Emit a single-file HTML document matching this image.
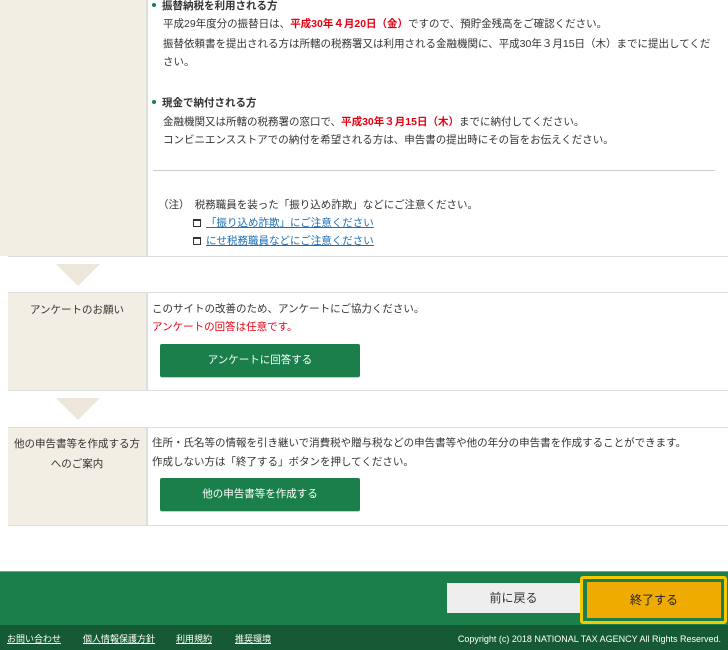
<!DOCTYPE html>
<html><head><meta charset="utf-8"><style>
*{margin:0;padding:0;box-sizing:border-box}
body{width:728px;height:650px;overflow:hidden;background:#fff;font-family:"Liberation Sans","Noto Sans CJK JP",sans-serif;font-size:10.5px;color:#333;position:relative}
.abs{position:absolute}
.beige{background:#f2eee4}
.red{color:#e60012;font-weight:bold}
.t{position:absolute;white-space:nowrap;line-height:18px}
.b{font-weight:bold}
.dot{display:inline-block;width:4px;height:4px;border-radius:2px;background:#1a7f4b;margin:0 6px 2px 0;vertical-align:middle}
.lnk{color:#1a6fb5;text-decoration:underline}
.ico{display:inline-block;width:8px;height:8px;border:1.5px solid #333;border-top-width:2.5px;margin-right:5px;vertical-align:-1px}
.tri{position:absolute;width:0;height:0;border-left:22px solid transparent;border-right:22px solid transparent;border-top:22px solid #ece7da}
.btn{position:absolute;background:#1a7f4b;color:#fff;text-align:center;font-size:10.5px;border-radius:2px;box-shadow:0 1px 0 #b9d8c4}
.lbl{position:absolute;text-align:center;line-height:20px;font-size:10.5px;color:#333}
</style></head><body>
<div class="abs beige" style="left:0;top:0;width:146px;height:256px"></div>
<div class="abs" style="left:146px;top:0;width:2px;height:256px;background:#ddd"></div>
<div class="abs" style="left:8px;top:256px;width:720px;height:1px;background:#ddd"></div>
<div class="t b" style="left:152px;top:-3px"><span class="dot"></span>振替納税を利用される方</div>
<div class="t" style="left:163px;top:15px">平成29年度分の振替日は、<span class="red">平成30年４月20日（金）</span>ですので、預貯金残高をご確認ください。</div>
<div class="t" style="left:163px;top:35px">振替依頼書を提出される方は所轄の税務署又は利用される金融機関に、平成30年３月15日（木）までに提出してくだ</div>
<div class="t" style="left:163px;top:53px">さい。</div>
<div class="t b" style="left:152px;top:94px"><span class="dot"></span>現金で納付される方</div>
<div class="t" style="left:163px;top:113px">金融機関又は所轄の税務署の窓口で、<span class="red">平成30年３月15日（木）</span>までに納付してください。</div>
<div class="t" style="left:163px;top:131px">コンビニエンスストアでの納付を希望される方は、申告書の提出時にその旨をお伝えください。</div>
<div class="abs" style="left:153px;top:170px;width:562px;height:1px;background:#ccc"></div>
<div class="t" style="left:158px;top:196px">（注）　税務職員を装った「振り込め詐欺」などにご注意ください。</div>
<div class="t" style="left:193px;top:214px"><span class="ico"></span><span class="lnk">「振り込め詐欺」にご注意ください</span></div>
<div class="t" style="left:193px;top:232px"><span class="ico"></span><span class="lnk">にせ税務職員などにご注意ください</span></div>

<div class="tri" style="left:56px;top:264px"></div>
<div class="abs" style="left:8px;top:292px;width:720px;height:1px;background:#ddd"></div>
<div class="abs beige" style="left:8px;top:293px;width:138px;height:97px"></div>
<div class="abs" style="left:146px;top:293px;width:2px;height:97px;background:#ddd"></div>
<div class="abs" style="left:8px;top:390px;width:720px;height:1px;background:#ddd"></div>
<div class="lbl" style="left:8px;top:300px;width:138px">アンケートのお願い</div>
<div class="t" style="left:152px;top:300px">このサイトの改善のため、アンケートにご協力ください。</div>
<div class="t" style="left:152px;top:318px;color:#e60012">アンケートの回答は任意です。</div>
<div class="btn" style="left:160px;top:344px;width:200px;height:33px;line-height:33px">アンケートに回答する</div>

<div class="tri" style="left:56px;top:398px"></div>
<div class="abs" style="left:8px;top:427px;width:720px;height:1px;background:#ddd"></div>
<div class="abs beige" style="left:8px;top:428px;width:138px;height:97px"></div>
<div class="abs" style="left:146px;top:428px;width:2px;height:97px;background:#ddd"></div>
<div class="abs" style="left:8px;top:525px;width:720px;height:1px;background:#ddd"></div>
<div class="lbl" style="left:8px;top:434px;width:138px">他の申告書等を作成する方<br>へのご案内</div>
<div class="t" style="left:152px;top:434px">住所・氏名等の情報を引き継いで消費税や贈与税などの申告書等や他の年分の申告書を作成することができます。</div>
<div class="t" style="left:152px;top:453px">作成しない方は「終了する」ボタンを押してください。</div>
<div class="btn" style="left:160px;top:478px;width:200px;height:33px;line-height:33px">他の申告書等を作成する</div>

<div class="abs" style="left:0;top:571px;width:728px;height:54px;background:#1a7f4b;border-top:1px solid #6aa889"></div>
<div class="abs" style="left:447px;top:583px;width:133px;height:30px;background:#eee;text-align:center;line-height:30px;font-size:12px;color:#333">前に戻る</div>
<div class="abs" style="left:580px;top:576px;width:147px;height:48px;border:3px solid #f5c800;border-radius:3px;background:#1a7f4b"></div>
<div class="abs" style="left:587px;top:582px;width:134px;height:36px;background:#f0ab00;text-align:center;line-height:36px;font-size:12px;color:#222">終了する</div>
<div class="abs" style="left:0;top:625px;width:728px;height:25px;background:#155a34"></div>
<div class="t" style="left:7px;top:632px;font-size:9px;line-height:14px;color:#fff;text-decoration:underline">お問い合わせ</div>
<div class="t" style="left:83px;top:632px;font-size:9px;line-height:14px;color:#fff;text-decoration:underline">個人情報保護方針</div>
<div class="t" style="left:176px;top:632px;font-size:9px;line-height:14px;color:#fff;text-decoration:underline">利用規約</div>
<div class="t" style="left:235px;top:632px;font-size:9px;line-height:14px;color:#fff;text-decoration:underline">推奨環境</div>
<div class="t" style="right:7px;top:632px;font-size:9px;line-height:14px;color:#fff">Copyright (c) 2018 NATIONAL TAX AGENCY All Rights Reserved.</div>
</body></html>
